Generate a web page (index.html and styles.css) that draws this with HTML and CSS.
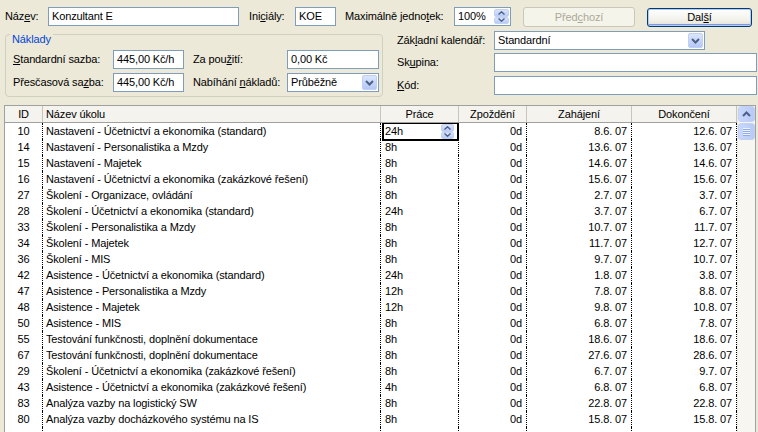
FILE: index.html
```html
<!DOCTYPE html>
<html lang="cs">
<head>
<meta charset="utf-8">
<title>Informace o zdroji</title>
<link rel="stylesheet" href="styles.css">
</head>
<body>
<div class="dialog">
  <div class="row1">
    <span class="lbl w-nazev">Náz<u>e</u>v:</span>
    <div class="field f-nazev">Konzultant E</div>
    <span class="lbl w-inic">Ini<u>c</u>iály:</span>
    <div class="field f-inic">KOE</div>
    <span class="lbl w-max">Maximálně jedno<u>t</u>ek:</span>
    <div class="field f-max"><span class="ftext">100%</span>
      <span class="spin">
        <span class="sbtn"><svg width="7" height="4" viewBox="0 0 7 4"><path d="M0.5 3.5 L3.5 0.8 L6.5 3.5" fill="none" stroke="#4d6185" stroke-width="1.4"/></svg></span>
        <span class="sbtn"><svg width="7" height="4" viewBox="0 0 7 4"><path d="M0.5 0.5 L3.5 3.2 L6.5 0.5" fill="none" stroke="#4d6185" stroke-width="1.4"/></svg></span>
      </span>
    </div>
    <div class="btn btn-prev">Před<u>c</u>hozí</div>
    <div class="btn btn-next">Dal<u>š</u>í</div>
  </div>

  <div class="row2">
    <div class="group">
      <div class="legend">Náklady</div>
      <div class="grow">
        <span class="lbl g-l1"><u>S</u>tandardní sazba:</span>
        <div class="field g-f1">445,00 Kč/h</div>
        <span class="lbl g-l2">Za pou<u>ž</u>ití:</span>
        <div class="field g-f2">0,00 Kč</div>
      </div>
      <div class="grow">
        <span class="lbl g-l1">Přesčasová sa<u>z</u>ba:</span>
        <div class="field g-f1">445,00 Kč/h</div>
        <span class="lbl g-l2">Nabíhání <u>n</u>ákladů:</span>
        <div class="field g-f2 combo"><span class="ftext">Průběžně</span>
          <span class="cbtn"><svg width="9" height="6" viewBox="0 0 9 6"><path d="M1 1 L4.5 4.5 L8 1" fill="none" stroke="#4d6185" stroke-width="2"/></svg></span>
        </div>
      </div>
    </div>

    <div class="rcol">
      <div class="rrow">
        <span class="lbl r-l">Zák<u>l</u>adní kalendář:</span>
        <div class="field r-cal combo"><span class="ftext">Standardní</span>
          <span class="cbtn"><svg width="9" height="6" viewBox="0 0 9 6"><path d="M1 1 L4.5 4.5 L8 1" fill="none" stroke="#4d6185" stroke-width="2"/></svg></span>
        </div>
      </div>
      <div class="rrow r2">
        <span class="lbl r-l">Sk<u>u</u>pina:</span>
        <div class="field r-f"></div>
      </div>
      <div class="rrow r3">
        <span class="lbl r-l"><u>K</u>ód:</span>
        <div class="field r-f"></div>
      </div>
    </div>
  </div>

  <div class="grid">
    <div class="tbl">
      <div class="hr">
        <div class="hc c-id">ID</div>
        <div class="hc c-name">Název úkolu</div>
        <div class="hc">Práce</div>
        <div class="hc">Zpoždění</div>
        <div class="hc">Zahájení</div>
        <div class="hc">Dokončení</div>
      </div>
      <div class="r">
        <div class="c c-id">10</div><div class="c c-name">Nastavení - Účetnictví a ekonomika (standard)</div>
        <div class="c c-work sel"><div class="edit"><span class="etext">24h</span>
          <span class="spin espin">
            <span class="sbtn"><svg width="7" height="4" viewBox="0 0 7 4"><path d="M0.5 3.5 L3.5 0.8 L6.5 3.5" fill="none" stroke="#4d6185" stroke-width="1.4"/></svg></span>
            <span class="sbtn"><svg width="7" height="4" viewBox="0 0 7 4"><path d="M0.5 0.5 L3.5 3.2 L6.5 0.5" fill="none" stroke="#4d6185" stroke-width="1.4"/></svg></span>
          </span></div></div>
        <div class="c c-num">0d</div><div class="c c-num">8.6. 07</div><div class="c c-num">12.6. 07</div>
      </div>
      <div class="r"><div class="c c-id">14</div><div class="c c-name">Nastavení - Personalistika a Mzdy</div><div class="c c-work">8h</div><div class="c c-num">0d</div><div class="c c-num">13.6. 07</div><div class="c c-num">13.6. 07</div></div>
      <div class="r"><div class="c c-id">15</div><div class="c c-name">Nastavení - Majetek</div><div class="c c-work">8h</div><div class="c c-num">0d</div><div class="c c-num">14.6. 07</div><div class="c c-num">14.6. 07</div></div>
      <div class="r"><div class="c c-id">16</div><div class="c c-name">Nastavení - Účetnictví a ekonomika (zakázkové řešení)</div><div class="c c-work">8h</div><div class="c c-num">0d</div><div class="c c-num">15.6. 07</div><div class="c c-num">15.6. 07</div></div>
      <div class="r"><div class="c c-id">27</div><div class="c c-name">Školení - Organizace, ovládání</div><div class="c c-work">8h</div><div class="c c-num">0d</div><div class="c c-num">2.7. 07</div><div class="c c-num">3.7. 07</div></div>
      <div class="r"><div class="c c-id">28</div><div class="c c-name">Školení - Účetnictví a ekonomika (standard)</div><div class="c c-work">24h</div><div class="c c-num">0d</div><div class="c c-num">3.7. 07</div><div class="c c-num">6.7. 07</div></div>
      <div class="r"><div class="c c-id">33</div><div class="c c-name">Školení - Personalistika a Mzdy</div><div class="c c-work">8h</div><div class="c c-num">0d</div><div class="c c-num">10.7. 07</div><div class="c c-num">11.7. 07</div></div>
      <div class="r"><div class="c c-id">34</div><div class="c c-name">Školení - Majetek</div><div class="c c-work">8h</div><div class="c c-num">0d</div><div class="c c-num">11.7. 07</div><div class="c c-num">12.7. 07</div></div>
      <div class="r"><div class="c c-id">36</div><div class="c c-name">Školení - MIS</div><div class="c c-work">8h</div><div class="c c-num">0d</div><div class="c c-num">9.7. 07</div><div class="c c-num">10.7. 07</div></div>
      <div class="r"><div class="c c-id">42</div><div class="c c-name">Asistence - Účetnictví a ekonomika (standard)</div><div class="c c-work">24h</div><div class="c c-num">0d</div><div class="c c-num">1.8. 07</div><div class="c c-num">3.8. 07</div></div>
      <div class="r"><div class="c c-id">47</div><div class="c c-name">Asistence - Personalistika a Mzdy</div><div class="c c-work">12h</div><div class="c c-num">0d</div><div class="c c-num">7.8. 07</div><div class="c c-num">8.8. 07</div></div>
      <div class="r"><div class="c c-id">48</div><div class="c c-name">Asistence - Majetek</div><div class="c c-work">12h</div><div class="c c-num">0d</div><div class="c c-num">9.8. 07</div><div class="c c-num">10.8. 07</div></div>
      <div class="r"><div class="c c-id">50</div><div class="c c-name">Asistence - MIS</div><div class="c c-work">8h</div><div class="c c-num">0d</div><div class="c c-num">6.8. 07</div><div class="c c-num">7.8. 07</div></div>
      <div class="r"><div class="c c-id">55</div><div class="c c-name">Testování funkčnosti, doplnění dokumentace</div><div class="c c-work">8h</div><div class="c c-num">0d</div><div class="c c-num">18.6. 07</div><div class="c c-num">18.6. 07</div></div>
      <div class="r"><div class="c c-id">67</div><div class="c c-name">Testování funkčnosti, doplnění dokumentace</div><div class="c c-work">8h</div><div class="c c-num">0d</div><div class="c c-num">27.6. 07</div><div class="c c-num">28.6. 07</div></div>
      <div class="r"><div class="c c-id">29</div><div class="c c-name">Školení - Účetnictví a ekonomika (zakázkové řešení)</div><div class="c c-work">8h</div><div class="c c-num">0d</div><div class="c c-num">6.7. 07</div><div class="c c-num">9.7. 07</div></div>
      <div class="r"><div class="c c-id">43</div><div class="c c-name">Asistence - Účetnictví a ekonomika (zakázkové řešení)</div><div class="c c-work">4h</div><div class="c c-num">0d</div><div class="c c-num">6.8. 07</div><div class="c c-num">6.8. 07</div></div>
      <div class="r"><div class="c c-id">83</div><div class="c c-name">Analýza vazby na logistický SW</div><div class="c c-work">8h</div><div class="c c-num">0d</div><div class="c c-num">22.8. 07</div><div class="c c-num">22.8. 07</div></div>
      <div class="r"><div class="c c-id">80</div><div class="c c-name">Analýza vazby docházkového systému na IS</div><div class="c c-work">8h</div><div class="c c-num">0d</div><div class="c c-num">15.8. 07</div><div class="c c-num">15.8. 07</div></div>
      <div class="r"><div class="c c-id"></div><div class="c c-name"></div><div class="c c-work"></div><div class="c c-num"></div><div class="c c-num"></div><div class="c c-num"></div></div>
    </div>
    <div class="vscroll">
      <div class="vbtn"><svg width="9" height="6" viewBox="0 0 9 6"><path d="M1 5 L4.5 1.5 L8 5" fill="none" stroke="#4d6185" stroke-width="2"/></svg></div>
      <div class="vthumb"><span class="grip"></span><span class="grip"></span><span class="grip"></span><span class="grip"></span></div>
    </div>
  </div>
</div>
</body>
</html>
```

FILE: styles.css
```css
html, body {
  margin: 0;
  padding: 0;
}
body {
  background: #ece9d8;
  font-family: "Liberation Sans", Arial, sans-serif;
  font-size: 11px;
  letter-spacing: -0.13px;
  color: #000;
  width: 758px;
  height: 432px;
  overflow: hidden;
}
u {
  text-decoration: underline;
  text-underline-offset: 1px;
}
.lbl {
  display: block;
  line-height: 19px;
  height: 19px;
  white-space: nowrap;
  flex: none;
}
.field {
  flex: none;
  box-sizing: border-box;
  height: 19px;
  border: 1px solid #7f9db9;
  background: #fff;
  padding: 0 3px;
  line-height: 17px;
  white-space: nowrap;
  display: flex;
  align-items: stretch;
}
.ftext {
  flex: 1;
}

/* first row */
.row1 {
  display: flex;
  align-items: flex-start;
  padding: 7px 0 0 5px;
  height: 20px;
}
.w-nazev { width: 43px; }
.f-nazev { width: 191px; }
.w-inic { width: 46px; margin-left: 10px; }
.f-inic { width: 41px; }
.w-max { width: 109px; margin-left: 9px; }
.f-max { width: 57px; padding-right: 1px; }

.spin {
  display: flex;
  flex-direction: column;
  width: 15px;
}
.sbtn {
  flex: 1;
  display: flex;
  align-items: center;
  justify-content: center;
  background: linear-gradient(#d8e3fd, #b9cbf6);
  border: 1px solid #c3d2f3;
  border-radius: 2px;
}
.f-max .sbtn { margin: 1px 0 0 0; }
.f-max .sbtn + .sbtn { margin: 0 0 1px 0; }

.btn {
  flex: none;
  box-sizing: border-box;
  height: 20px;
  border-radius: 3px;
  text-align: center;
  line-height: 18px;
}
.btn-prev {
  width: 112px;
  margin-left: 12px;
  border: 1px solid #c9c7ba;
  background: #f5f4ea;
  color: #aca899;
}
.btn-next {
  width: 105px;
  margin-left: 12px;
  margin-top: 1px;
  height: 19px;
  line-height: 17px;
  border: 1px solid #003c74;
  background: linear-gradient(#ffffff, #f3f2ec 60%, #e3e0d4);
  box-shadow: inset 0 0 0 1px #b6c9f1, inset 0 -2px 0 0 #7a98e8;
}

/* second row */
.row2 {
  display: flex;
  align-items: flex-start;
  margin-top: 4px;
}
.group {
  flex: none;
  box-sizing: border-box;
  width: 378px;
  height: 63px;
  margin: 3px 0 0 5px;
  border: 1px solid #d0d0bf;
  border-radius: 4px;
}
.legend {
  width: max-content;
  margin: -2px 0 0 4px;
  padding: 0 2px;
  background: #ece9d8;
  color: #0046d5;
  line-height: 13px;
}
.grow {
  display: flex;
  margin-top: 4px;
  padding-left: 7px;
}
.g-l1 { width: 100px; }
.g-f1 { width: 71px; }
.g-l2 { width: 94px; margin-left: 9px; }
.g-f2 { width: 92px; }

.combo {
  padding-right: 1px;
}
.cbtn {
  flex: none;
  width: 15px;
  margin: 1px 0;
  display: flex;
  align-items: center;
  justify-content: center;
  background: linear-gradient(#dbe5fd, #b4c8f6);
  border: 1px solid #c0cff2;
  border-radius: 2px;
  box-sizing: border-box;
}

.rcol {
  margin-left: 14px;
}
.rrow {
  display: flex;
}
.r2 { margin-top: 3px; }
.r3 { margin-top: 4px; }
.r-l { width: 97px; }
.r-cal { width: 211px; }
.r-f { width: 263px; }

/* grid */
.grid {
  display: flex;
  margin: 8px 0 0 4px;
  width: 752px;
  height: 340px;
  box-sizing: border-box;
  border: 1px solid #a0a0a0;
  background: #fff;
}
.tbl {
  width: 732px;
  flex: none;
}
.hr, .r {
  display: grid;
  grid-template-columns: 38px 338px 78px 68px 105px 105px;
}
.hr {
  height: 17px;
  box-sizing: border-box;
  background: #f4f3ee;
  border-bottom: 1px solid #a0a0a0;
}
.hc {
  box-sizing: border-box;
  border-right: 1px solid #c8c6bc;
  text-align: center;
  line-height: 16px;
  white-space: nowrap;
}
.hc.c-name {
  text-align: left;
  padding-left: 3px;
}
.r {
  height: 16px;
}
.c {
  box-sizing: border-box;
  border-right: 1px dotted #000;
  line-height: 16px;
  white-space: nowrap;
  overflow: hidden;
}
.c-id {
  text-align: center;
}
.c.c-name {
  padding-left: 3px;
}
.c-work {
  padding-left: 4px;
}
.c-num {
  text-align: right;
  padding-right: 4px;
}
.c.sel {
  padding: 0;
  border-right: none;
  overflow: visible;
}
.edit {
  box-sizing: border-box;
  height: 18px;
  width: 77px;
  margin-left: 1px;
  border: 2px solid #000;
  border-top-width: 1px;
  background: #fff;
  display: flex;
  position: relative;
  z-index: 1;
}
.etext {
  flex: 1;
  padding-left: 1px;
  line-height: 14px;
}
.espin {
  width: 13px;
  margin-right: 3px;
}

.vscroll {
  flex: none;
  width: 18px;
  background: #f7f6f1;
  border-left: 1px solid #ecebe4;
  box-sizing: border-box;
}
.vbtn {
  height: 16px;
  box-sizing: border-box;
  border: 1px solid #c2d1f3;
  border-radius: 3px;
  background: linear-gradient(90deg, #c9d8fc, #b7caf5);
  display: flex;
  align-items: center;
  justify-content: center;
}
.vthumb {
  height: 17px;
  margin-top: 1px;
  box-sizing: border-box;
  border: 1px solid #c2d1f3;
  border-radius: 3px;
  background: linear-gradient(90deg, #c9d8fc, #b7caf5);
  display: flex;
  flex-direction: column;
  align-items: center;
  justify-content: center;
  gap: 1px;
}
.grip {
  width: 7px;
  height: 1px;
  background: #eef4fe;
  box-shadow: 0 1px 0 #8faae6;
}
```
